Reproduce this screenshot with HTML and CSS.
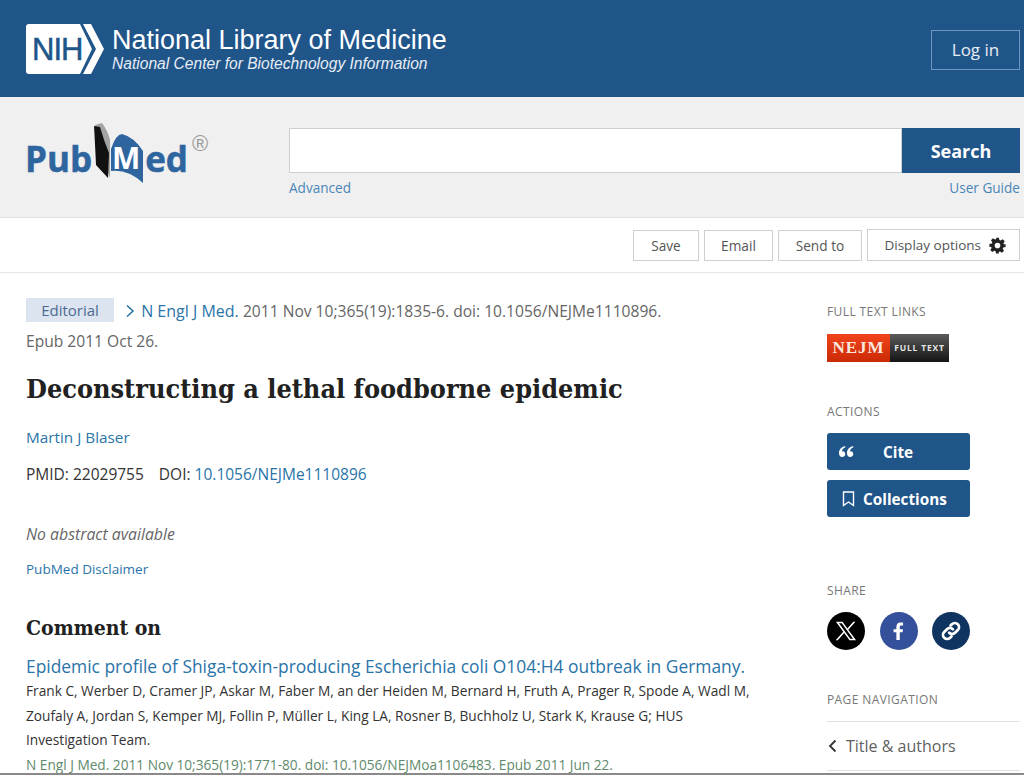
FILE: index.html
```html
<!DOCTYPE html>
<html lang="en">
<head>
  <meta charset="UTF-8">
  <meta name="viewport" content="width=device-width, initial-scale=1.0">
  <title>Deconstructing a lethal foodborne epidemic - PubMed</title>
  <link rel="stylesheet" href="styles.css">
</head>
<body>
  <div class="page">
    <header class="ncbi-header">
      <a href="#" class="nlm-logo">
        <svg class="nih-mark" width="78" height="50" viewBox="0 0 78 50">
          <path d="M3 0H54L66 25L54 50H3A3 3 0 0 1 0 47V3A3 3 0 0 1 3 0Z" fill="#fff"/>
          <path d="M57 0H65L78 25L65 50H57L70 25Z" fill="#fff"/>
          <text x="6" y="36" class="nih-text">NIH</text>
        </svg>
        <span class="nlm-text">
          <span class="nlm-name">National Library of Medicine</span>
          <span class="nlm-sub">National Center for Biotechnology Information</span>
        </span>
      </a>
      <a href="#" class="login">Log in</a>
    </header>

    <section class="search-band">
      <a href="#" class="pubmed-logo">
        <span class="pm-word">Pub</span>
        <svg class="pm-book" width="53" height="62" viewBox="0 0 53 62">
          <path d="M3 2L10 0Q16 8 18 17L18 55L10 35Z" fill="#a3a3a3"/>
          <path d="M2 3L8 4Q12 18 17 30L16 55L4 42Q3 20 2 3Z" fill="#111"/>
          <path d="M19 26Q24 11 30 11Q42 14 51 28L51 60Q36 46 19 48Z" fill="#2f659f"/>
          <text x="20" y="46" class="pm-m">M</text>
        </svg>
        <span class="pm-word">ed</span>
        <span class="pm-reg">®</span>
      </a>
      <form class="search-form">
        <div class="search-row">
          <input class="search-input" type="text" aria-label="Search">
          <button class="search-btn" type="button">Search</button>
        </div>
        <div class="search-links">
          <a href="#">Advanced</a>
          <a href="#">User Guide</a>
        </div>
      </form>
    </section>

    <nav class="toolbar">
      <button class="tool-btn tool-save" type="button">Save</button>
      <button class="tool-btn tool-email" type="button">Email</button>
      <button class="tool-btn tool-send" type="button">Send to</button>
      <button class="tool-btn tool-display" type="button">
        Display options
        <svg width="17" height="17" viewBox="0 0 24 24"><path fill="#222" fill-rule="evenodd" d="M10 1h4l.7 3.3 1.8.8 2.9-1.9 2.8 2.8-1.9 2.9.8 1.8L23.400 10v4l-3.300.7-.8 1.800 1.900 2.900-2.800 2.800-2.900-1.900-1.800.8L14 23.400h-4l-.7-3.300-1.800-.8-2.900 1.900-2.800-2.800 1.900-2.900-.8-1.800L.6 14v-4l3.300-.7.8-1.800-1.900-2.900 2.800-2.800 2.900 1.900 1.800-.8ZM12 8a4 4 0 1 0 0 8 4 4 0 0 0 0-8Z"/></svg>
      </button>
    </nav>

    <div class="content">
      <main class="article">
        <div class="cit">
          <span class="pub-type">Editorial</span>
          <a href="#" class="journal"><svg class="cit-chevron" width="10" height="14" viewBox="0 0 10 14"><path d="M2 1.500L8 7L2 12.500" fill="none" stroke="#2a74a8" stroke-width="1.600"/></svg>N Engl J Med.</a>
          <span class="cit-rest">2011 Nov 10;365(19):1835-6. doi: 10.1056/NEJMe1110896.<br>Epub 2011 Oct 26.</span>
        </div>
        <h1 class="title">Deconstructing a lethal foodborne epidemic</h1>
        <div class="authors"><a href="#">Martin J Blaser</a></div>
        <div class="ids">
          <span class="pmid">PMID: 22029755</span>
          <span>DOI: <a href="#">10.1056/NEJMe1110896</a></span>
        </div>
        <p class="no-abstract">No abstract available</p>
        <a href="#" class="disclaimer">PubMed Disclaimer</a>
        <h2 class="section-title">Comment on</h2>
        <a href="#" class="ref-title">Epidemic profile of Shiga-toxin-producing Escherichia coli O104:H4 outbreak in Germany.</a>
        <p class="ref-authors">Frank C, Werber D, Cramer JP, Askar M, Faber M, an der Heiden M, Bernard H, Fruth A, Prager R, Spode A, Wadl M, Zoufaly A, Jordan S, Kemper MJ, Follin P, Müller L, King LA, Rosner B, Buchholz U, Stark K, Krause G; HUS Investigation Team.</p>
        <p class="ref-source">N Engl J Med. 2011 Nov 10;365(19):1771-80. doi: 10.1056/NEJMoa1106483. Epub 2011 Jun 22.</p>
      </main>

      <aside class="sidebar">
        <h3 class="side-label side-full">Full text links</h3>
        <a href="#" class="nejm-badge">
          <span class="nejm-red">NEJM</span>
          <span class="nejm-dark">FULL TEXT</span>
        </a>

        <h3 class="side-label side-actions">Actions</h3>
        <button class="action-btn action-cite" type="button">
          <svg width="15" height="11" viewBox="0 0 15 11"><path fill="#fff" d="M6 0C2.500 1 0 3.500 0 7c0 2.500 1.300 4 3.200 4C5 11 6.300 9.800 6.300 8.100S5.100 5.300 3.600 5.300c-.3 0-.6 0-.8.100C3.100 3.700 4.400 2.300 6.400 1.300ZM14 0c-3.500 1-6 3.500-6 7 0 2.500 1.300 4 3.200 4 1.800 0 3.100-1.200 3.100-2.900s-1.200-2.800-2.700-2.800c-.3 0-.6 0-.8.100.3-1.700 1.600-3.100 3.600-4.100Z"/></svg>
          <span>Cite</span>
        </button>
        <button class="action-btn action-coll" type="button">
          <svg width="13" height="16" viewBox="0 0 13 16"><path d="M1.500 1h10v13.500L6.500 11l-5 3.500Z" fill="none" stroke="#fff" stroke-width="1.400"/></svg>
          <span>Collections</span>
        </button>

        <h3 class="side-label side-share">Share</h3>
        <div class="share-row">
          <a href="#" class="share-circle share-x">
            <svg width="22" height="22" viewBox="0 0 24 24"><path fill-rule="evenodd" fill="#fff" d="M1 2h7.200l5.300 7.300L20 2h2.300l-7.800 8.700L23 22h-7.200l-5.800-7.900L3 22H.7l8.300-9.200ZM4.300 3.600l12.300 16.800h3.100L7.400 3.600Z"/></svg>
          </a>
          <a href="#" class="share-circle share-fb">
            <svg width="11" height="18" viewBox="0 0 13 21"><path fill="#fff" d="M4 21V12H.7V8.300H4V5.500C4 2.200 6 .5 8.900.5c1.400 0 2.600.1 3 .2v3.300h-2C8.300 4 8 4.800 8 5.900v2.400h3.800L11.300 12H8v9Z"/></svg>
          </a>
          <a href="#" class="share-circle share-link">
            <svg width="22" height="22" viewBox="0 0 24 24" fill="none" stroke="#fff" stroke-width="3" stroke-linecap="round"><path d="M10 14a4.500 4.500 0 0 0 6.400 0l3-3a4.500 4.500 0 0 0-6.400-6.400l-1.500 1.500"/><path d="M14 10a4.500 4.500 0 0 0-6.400 0l-3 3a4.500 4.500 0 0 0 6.400 6.400l1.500-1.500"/></svg>
          </a>
        </div>

        <h3 class="side-label side-nav">Page navigation</h3>
        <a href="#" class="nav-item">
          <svg width="9" height="14" viewBox="0 0 9 14"><path d="M7.500 1.500L2 7l5.500 5.500" fill="none" stroke="#333" stroke-width="1.800"/></svg>
          Title &amp; authors
        </a>
      </aside>
    </div>
  </div>
</body>
</html>
```

FILE: styles.css
```css
html, body {
  margin: 0;
  padding: 0;
}

body {
  font-family: "Open Sans", "Noto Sans", sans-serif;
  color: #333;
  background-color: #fff;
}

a {
  color: #2a74a8;
  text-decoration: none;
}

button {
  font-family: inherit;
  cursor: pointer;
}

.page {
  height: 773px;
  overflow: hidden;
  border-bottom: 2px solid #8a8a8a;
}

/* top blue bar */
.ncbi-header {
  height: 97px;
  background-color: #20558a;
  display: flex;
  align-items: center;
  justify-content: space-between;
  padding: 0 4px 0 26px;
}

.nlm-logo {
  display: flex;
  align-items: center;
  gap: 8px;
  color: #fff;
  margin-top: 1px;
}

.nih-text {
  font-family: "Liberation Sans", sans-serif;
  font-size: 31px;
  letter-spacing: -1px;
  fill: #20558a;
  stroke: #20558a;
  stroke-width: 0.5px;
}

.nlm-text {
  display: flex;
  flex-direction: column;
  font-family: "Liberation Sans", sans-serif;
}

.nlm-name {
  font-size: 27px;
  line-height: 30px;
}

.nlm-sub {
  font-size: 15.600px;
  font-style: italic;
  line-height: 18px;
  color: #e6edf4;
}

.login {
  width: 87px;
  height: 38px;
  border: 1px solid #6f97bf;
  color: #e8eef5;
  font-size: 17px;
  line-height: 38px;
  text-align: center;
  margin-top: 3px;
}

/* search area */
.search-band {
  height: 120px;
  background-color: #f0f0f0;
  border-bottom: 1px solid #e2e2e2;
  display: flex;
  padding: 0 4px 0 25px;
}

.pubmed-logo {
  width: 264px;
  height: 62px;
  margin-top: 26px;
  display: flex;
  align-items: flex-start;
}

.pm-word {
  font-family: "Open Sans", sans-serif;
  font-weight: 700;
  font-size: 35px;
  line-height: 35px;
  color: #2f659f;
  -webkit-text-stroke: 0.5px #2f659f;
  margin-top: 18px;
}

.pm-book {
  flex-shrink: 0;
}

.pm-m {
  font-family: "Open Sans", sans-serif;
  font-weight: 700;
  font-size: 30px;
  fill: #fff;
}

.pm-reg {
  font-family: "Liberation Sans", sans-serif;
  font-size: 22px;
  line-height: 24px;
  color: #9a9a9a;
  margin: 9px 0 0 4px;
}

.search-form {
  flex: 1;
  margin-top: 31px;
}

.search-row {
  display: flex;
  height: 45px;
}

.search-input {
  flex: 1;
  min-width: 0;
  box-sizing: border-box;
  height: 45px;
  border: 1px solid #cfcfcf;
  background-color: #fff;
  padding: 0 10px;
}

.search-btn {
  width: 118px;
  height: 45px;
  background-color: #20558a;
  border: none;
  color: #fff;
  font-size: 18px;
  font-weight: 700;
}

.search-links {
  display: flex;
  justify-content: space-between;
  font-size: 13.600px;
  line-height: 20px;
  margin-top: 5px;
}

.search-links a {
  color: #4a86b8;
}

/* save / email bar */
.toolbar {
  height: 54px;
  border-bottom: 1px solid #e6e6e6;
  display: flex;
  align-items: center;
  justify-content: flex-end;
  gap: 5px;
  padding: 0 4px 0 0;
}

.tool-btn {
  height: 31px;
  background-color: #fff;
  border: 1px solid #cfcfcf;
  color: #555;
  font-size: 13.700px;
  padding: 0;
}

.tool-save { width: 66px; }
.tool-email { width: 69px; }
.tool-send { width: 84px; }

.tool-display {
  width: 153px;
  height: 32px;
  display: flex;
  align-items: center;
  justify-content: flex-end;
  gap: 8px;
  padding-right: 13px;
  font-size: 13.500px;
}

/* main columns */
.content {
  display: flex;
  padding: 23px 4px 0 26px;
}

.article {
  width: 730px;
  margin-right: 71px;
}

.cit {
  font-size: 16px;
  line-height: 30px;
  color: #666;
}

.cit-rest {
  font-size: 15.600px;
}

.pub-type {
  display: inline-block;
  width: 88px;
  height: 24px;
  line-height: 24px;
  background-color: #dce4f0;
  color: #4c6a91;
  font-size: 15px;
  text-align: center;
  margin-right: 7px;
  vertical-align: 1px;
}

.journal {
  color: #2a74a8;
}

.cit-chevron {
  margin-right: 6px;
  vertical-align: -1px;
}

.title {
  font-family: "DejaVu Serif Condensed", "Liberation Serif", serif;
  font-size: 26.800px;
  line-height: 34px;
  font-weight: 700;
  color: #212121;
  margin: 16px 0 0;
}

.authors {
  font-size: 15.300px;
  line-height: 22px;
  margin-top: 20px;
}

.ids {
  display: flex;
  gap: 15px;
  font-size: 15.500px;
  line-height: 22px;
  color: #333;
  margin-top: 15px;
}

.no-abstract {
  font-size: 15.800px;
  font-style: italic;
  line-height: 22px;
  color: #666;
  margin: 38px 0 0;
}

.disclaimer {
  display: block;
  font-size: 13.500px;
  line-height: 20px;
  margin-top: 14px;
}

.section-title {
  font-family: "DejaVu Serif Condensed", "Liberation Serif", serif;
  font-size: 21px;
  line-height: 28px;
  font-weight: 700;
  color: #212121;
  margin: 35px 0 0;
}

.ref-title {
  display: block;
  font-size: 17.400px;
  line-height: 26px;
  white-space: nowrap;
  margin-top: 11px;
}

.ref-authors {
  font-size: 13.700px;
  line-height: 24.500px;
  color: #333;
  margin: 0;
}

.ref-source {
  font-size: 13.660px;
  line-height: 23px;
  color: #5f8a6c;
  margin: 0;
  white-space: nowrap;
}

/* right column */
.sidebar {
  width: 193px;
  flex-shrink: 0;
}

.side-label {
  font-size: 12px;
  font-weight: 400;
  line-height: 16px;
  letter-spacing: 0.4px;
  text-transform: uppercase;
  color: #777;
  margin: 0;
}

.side-full {
  margin-top: 8px;
}

.nejm-badge {
  display: flex;
  width: 122px;
  height: 28px;
  margin-top: 14px;
}

.nejm-red {
  width: 63px;
  background: linear-gradient(#f2431c, #c92a05);
  color: #fbe6dc;
  font-family: "Liberation Serif", serif;
  font-weight: 700;
  font-size: 17px;
  letter-spacing: 1px;
  line-height: 28px;
  text-align: center;
}

.nejm-dark {
  flex: 1;
  background: linear-gradient(#5b5b5b, #151515);
  color: #e4e4e4;
  font-size: 8.500px;
  font-weight: 700;
  letter-spacing: 0.8px;
  line-height: 28px;
  text-align: center;
}

.side-actions {
  margin-top: 42px;
}

.action-btn {
  display: flex;
  align-items: center;
  width: 143px;
  height: 37px;
  background-color: #20558a;
  border: none;
  border-radius: 3px;
  color: #fff;
  font-size: 15.300px;
  font-weight: 700;
  padding: 0;
}

.action-cite {
  margin-top: 13px;
  padding-left: 12px;
  gap: 29px;
}

.action-coll {
  margin-top: 10px;
  padding-left: 15px;
  gap: 8px;
}

.side-share {
  margin-top: 66px;
}

.share-row {
  display: flex;
  gap: 14.500px;
  margin-top: 13px;
}

.share-circle {
  width: 38px;
  height: 38px;
  border-radius: 50%;
  display: flex;
  align-items: center;
  justify-content: center;
}

.share-x { background-color: #000; }
.share-fb { background-color: #35509a; }
.share-link { background-color: #0f3460; }

.side-nav {
  margin-top: 42px;
}

.nav-item {
  display: flex;
  align-items: center;
  gap: 9px;
  height: 48px;
  margin-top: 13px;
  border-top: 1px solid #e2e2e2;
  border-bottom: 1px solid #e2e2e2;
  color: #5f5f5f;
  font-size: 16px;
  padding-left: 1px;
}
```
